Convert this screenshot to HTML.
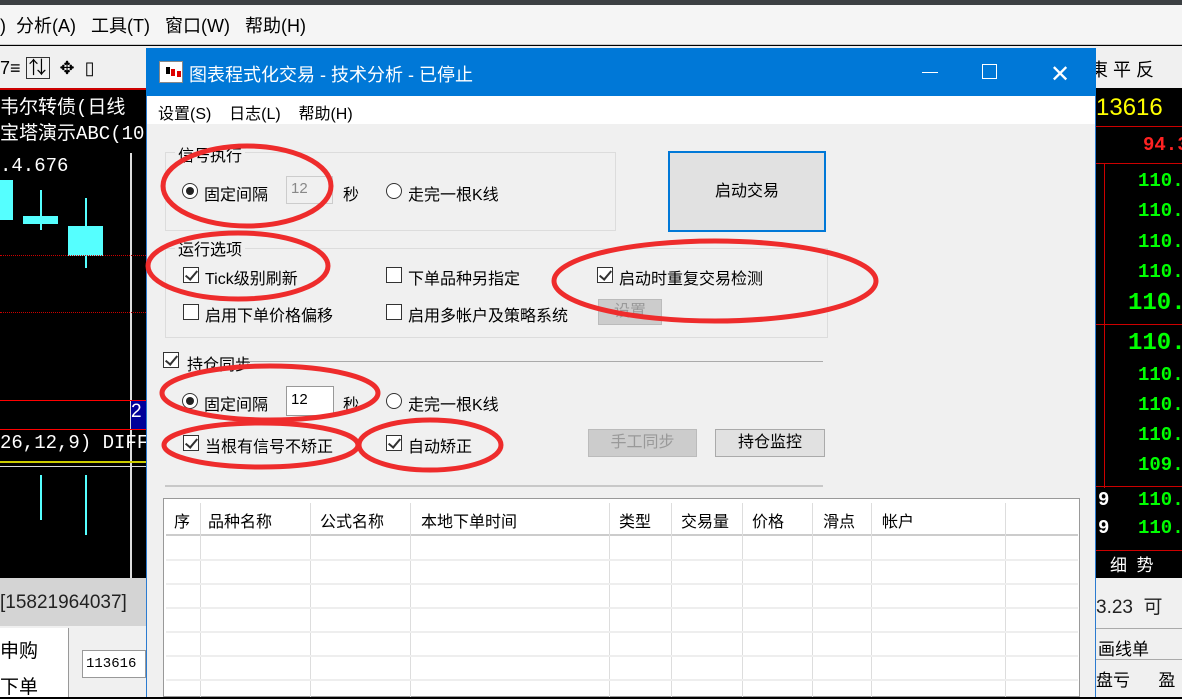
<!DOCTYPE html><html><head><meta charset="utf-8"><style>
*{margin:0;padding:0;box-sizing:border-box}
body{width:1182px;height:697px;overflow:hidden;position:relative;background:#000;font-family:"Liberation Sans","Noto Sans CJK SC",sans-serif;font-size:16px;color:#000}
.a{position:absolute;white-space:nowrap}
.cb{position:absolute;width:16px;height:16px;border:1px solid #333;background:#fff}
.cb.k::after{content:"";position:absolute;left:4px;top:0px;width:5px;height:10px;border:solid #333;border-width:0 2px 2px 0;transform:rotate(40deg)}
.rb{position:absolute;width:16px;height:16px;border:1px solid #333;border-radius:50%;background:#fff}
.rb.k::after{content:"";position:absolute;left:3px;top:3px;width:8px;height:8px;border-radius:50%;background:#222}
.g{color:#0f0;font-family:"Liberation Mono",monospace;font-weight:bold;font-size:19px}
</style></head><body>
<!-- main app background -->
<div class="a" style="left:0;top:0;width:1182px;height:5px;background:#3c4043"></div>
<div class="a" style="left:0;top:5px;width:1182px;height:40px;background:#f5f5f5;border-bottom:1px solid #ccc"></div>
<div class="a" style="left:0;top:12px;font-size:18px">)&nbsp;&nbsp;分析(A)&nbsp;&nbsp;&nbsp;工具(T)&nbsp;&nbsp;&nbsp;窗口(W)&nbsp;&nbsp;&nbsp;帮助(H)</div>
<div class="a" style="left:0;top:46px;width:1182px;height:42px;background:#f0f0f0"></div>
<div class="a" style="left:0;top:54px;font-size:18px">7≡ <span style="border:1px solid #333;padding:0 2px">⇅</span>&nbsp; ✥ &nbsp;▯</div>
<div class="a" style="left:1090px;top:56px;font-size:18px">東 平 反</div>
<div class="a" style="left:0;top:88px;width:146px;height:490px;background:#000;border-top:2px solid #c00"></div>
<div class="a" style="left:0;top:92px;color:#fff;font-size:19px;font-family:'Liberation Mono','Noto Sans CJK SC',monospace">韦尔转债(日线</div>
<div class="a" style="left:0;top:118px;color:#fff;font-size:19px;font-family:'Liberation Mono','Noto Sans CJK SC',monospace">宝塔演示ABC(10)</div>
<div class="a" style="left:0;top:155px;color:#fff;font-size:19px;font-family:'Liberation Mono',monospace">.4.676</div>
<div class="a" style="left:0;top:180px;width:13px;height:40px;background:#5ff"></div>
<div class="a" style="left:23px;top:216px;width:35px;height:8px;background:#5ff"></div>
<div class="a" style="left:40px;top:190px;width:2px;height:40px;background:#5ff"></div>
<div class="a" style="left:68px;top:226px;width:35px;height:30px;background:#5ff"></div>
<div class="a" style="left:85px;top:198px;width:2px;height:70px;background:#5ff"></div>
<div class="a" style="left:130px;top:153px;width:2px;height:430px;background:#ddd"></div>
<div class="a" style="left:0;top:255px;width:146px;border-top:1px dotted #c00"></div>
<div class="a" style="left:0;top:312px;width:146px;border-top:1px dotted #c00"></div>
<div class="a" style="left:0;top:400px;width:146px;height:30px;border-top:1px solid #f00;border-bottom:1px solid #f00"></div>
<div class="a" style="left:131px;top:401px;width:15px;height:28px;background:#009;color:#fff;font-size:19px">2</div>
<div class="a" style="left:0;top:432px;color:#fff;font-size:19px;font-family:'Liberation Mono',monospace">26,12,9) DIFF</div>
<div class="a" style="left:0;top:461px;width:146px;border-top:2px solid #cc0"></div>
<div class="a" style="left:0;top:466px;width:146px;border-top:1px solid #ddd"></div>
<div class="a" style="left:40px;top:475px;width:2px;height:45px;background:#5ff"></div>
<div class="a" style="left:85px;top:475px;width:2px;height:60px;background:#5ff"></div>
<div class="a" style="left:0;top:578px;width:146px;height:48px;background:#d4d4d4"></div>
<div class="a" style="left:0;top:592px;font-size:19px;color:#222">[15821964037]</div>
<div class="a" style="left:0;top:626px;width:146px;height:71px;background:#f0f0f0"></div>
<div class="a" style="left:0;top:628px;width:69px;height:69px;background:#fff;border-right:1px solid #999"></div>
<div class="a" style="left:0;top:636px;font-size:19px">申购</div>
<div class="a" style="left:0;top:672px;font-size:19px">下单</div>
<div class="a" style="left:82px;top:650px;width:64px;height:28px;background:#fff;border:1px solid #999;font-family:'Liberation Mono',monospace;font-size:14px;padding:5px 3px">113616</div>
<!-- right panel -->
<div class="a" style="left:1096px;top:88px;width:86px;height:490px;background:#000"></div>
<div class="a" style="left:1096px;top:94px;color:#ff0;font-size:24px;font-family:'Liberation Sans',sans-serif">13616 </div>
<div class="a" style="left:1096px;top:126px;width:86px;border-top:1px solid #c00"></div>
<div class="a" style="left:1143px;top:134px;color:#f22;font-weight:bold;font-size:19px;font-family:'Liberation Mono',monospace">94.3</div>
<div class="a" style="left:1096px;top:163px;width:86px;border-top:1px solid #c00"></div>
<div class="a" style="left:1104px;top:163px;height:325px;border-left:1px solid #c00"></div>
<div class="a g" style="left:1138px;top:170px">110.1</div>
<div class="a g" style="left:1138px;top:200px">110.1</div>
<div class="a g" style="left:1138px;top:231px">110.1</div>
<div class="a g" style="left:1138px;top:261px">110.1</div>
<div class="a g" style="left:1128px;top:290px;font-size:24px">110.1</div>
<div class="a" style="left:1096px;top:324px;width:86px;border-top:1px solid #c00"></div>
<div class="a g" style="left:1128px;top:330px;font-size:24px">110.1</div>
<div class="a g" style="left:1138px;top:364px">110.0</div>
<div class="a g" style="left:1138px;top:394px">110.0</div>
<div class="a g" style="left:1138px;top:424px">110.0</div>
<div class="a g" style="left:1138px;top:454px">109.9</div>
<div class="a" style="left:1096px;top:486px;width:86px;border-top:1px solid #c00"></div>
<div class="a g" style="left:1098px;top:489px;color:#fff">9</div><div class="a g" style="left:1138px;top:489px">110.1</div>
<div class="a g" style="left:1098px;top:517px;color:#fff">9</div><div class="a g" style="left:1138px;top:517px">110.1</div>
<div class="a" style="left:1096px;top:550px;width:86px;height:28px;border-top:1px solid #c00;color:#fff;font-size:17px;padding-left:14px">细 &nbsp;势</div>
<div class="a" style="left:1096px;top:578px;width:86px;height:119px;background:#f0f0f0"></div>
<div class="a" style="left:1096px;top:592px;font-size:19px;color:#222">3.23 &nbsp;可</div>
<div class="a" style="left:1096px;top:628px;width:86px;height:32px;border-top:1px solid #aaa;border-bottom:1px solid #aaa;font-size:17px;padding:6px 2px">画线单</div>
<div class="a" style="left:1096px;top:666px;font-size:17px">盘亏 &nbsp;&nbsp;&nbsp;&nbsp;&nbsp;盈</div>
<!-- dialog -->
<div class="a" style="left:146px;top:48px;width:950px;height:649px;background:#f0f0f0;border-left:1px solid #2b7bd0;border-right:1px solid #2b7bd0"></div>
<div class="a" style="left:146px;top:48px;width:950px;height:48px;background:#0078d7"></div>
<div class="a" style="left:159px;top:61px;width:24px;height:22px;background:#fff;border:1px solid #888"><div style="position:absolute;left:6px;top:5px;width:4px;height:7px;background:#000"></div><div style="position:absolute;left:11px;top:7px;width:4px;height:7px;background:#d00"></div><div style="position:absolute;left:17px;top:9px;width:4px;height:6px;background:#d00"></div></div>
<div class="a" style="left:189px;top:61px;color:#fff;font-size:18px">图表程式化交易 - 技术分析 - 已停止</div>
<div class="a" style="left:922px;top:72px;width:16px;border-top:1px solid #fff"></div>
<div class="a" style="left:982px;top:64px;width:15px;height:15px;border:1px solid #fff"></div>
<div class="a" style="left:1050px;top:60px;color:#fff;font-size:24px;font-weight:100">✕</div>
<div class="a" style="left:147px;top:96px;width:948px;height:28px;background:#fff"></div>
<div class="a" style="left:158px;top:100px">设置(S)&nbsp;&nbsp;&nbsp;&nbsp;日志(L)&nbsp;&nbsp;&nbsp;&nbsp;帮助(H)</div>
<!-- group 1 -->
<div class="a" style="left:165px;top:152px;width:451px;height:79px;border:1px solid #dcdcdc"></div>
<div class="a" style="left:175px;top:142px;background:#f0f0f0;padding:0 3px">信号执行</div>
<div class="rb k" style="left:182px;top:183px"></div><div class="a" style="left:204px;top:181px">固定间隔</div>
<div class="a" style="left:286px;top:176px;width:47px;height:28px;border:1px solid #ccc;background:#f0f0f0;color:#888;padding:3px 4px;font-size:15px">12</div>
<div class="a" style="left:343px;top:181px">秒</div>
<div class="rb" style="left:386px;top:183px"></div><div class="a" style="left:408px;top:181px">走完一根K线</div>
<div class="a" style="left:668px;top:151px;width:158px;height:81px;border:2px solid #0078d7;background:#e1e1e1;text-align:center;line-height:77px">启动交易</div>
<!-- group 2 -->
<div class="a" style="left:165px;top:248px;width:663px;height:90px;border:1px solid #dcdcdc"></div>
<div class="a" style="left:175px;top:236px;background:#f0f0f0;padding:0 3px">运行选项</div>
<div class="cb k" style="left:183px;top:267px"></div><div class="a" style="left:205px;top:265px">Tick级别刷新</div>
<div class="cb" style="left:386px;top:267px"></div><div class="a" style="left:408px;top:265px">下单品种另指定</div>
<div class="cb k" style="left:597px;top:267px"></div><div class="a" style="left:619px;top:265px">启动时重复交易检测</div>
<div class="cb" style="left:183px;top:304px"></div><div class="a" style="left:205px;top:302px">启用下单价格偏移</div>
<div class="cb" style="left:386px;top:304px"></div><div class="a" style="left:408px;top:302px;width:172px;overflow:hidden">启用多帐户及策略系统</div>
<div class="a" style="left:598px;top:299px;width:64px;height:26px;background:#ccc;border:1px solid #bbb;color:#999;text-align:center;line-height:24px">设置</div>
<!-- group 3 -->
<div class="cb k" style="left:163px;top:352px"></div><div class="a" style="left:187px;top:351px">持仓同步</div>
<div class="a" style="left:249px;top:361px;width:574px;border-top:1px solid #aaa"></div>
<div class="rb k" style="left:182px;top:393px"></div><div class="a" style="left:204px;top:391px">固定间隔</div>
<div class="a" style="left:286px;top:386px;width:48px;height:30px;border:1px solid #999;background:#fff;padding:4px 4px;font-size:15px">12</div>
<div class="a" style="left:343px;top:391px">秒</div>
<div class="rb" style="left:386px;top:393px"></div><div class="a" style="left:408px;top:391px">走完一根K线</div>
<div class="cb k" style="left:183px;top:435px"></div><div class="a" style="left:205px;top:433px">当根有信号不矫正</div>
<div class="cb k" style="left:386px;top:435px"></div><div class="a" style="left:408px;top:433px">自动矫正</div>
<div class="a" style="left:588px;top:429px;width:109px;height:28px;background:#ccc;border:1px solid #bbb;color:#999;text-align:center;line-height:26px">手工同步</div>
<div class="a" style="left:715px;top:429px;width:110px;height:28px;background:#e1e1e1;border:1px solid #aaa;text-align:center;line-height:26px">持仓监控</div>
<div class="a" style="left:165px;top:485px;width:658px;border-top:2px solid #c8c8c8"></div>
<!-- table -->
<div class="a" style="left:163px;top:498px;width:917px;height:199px;background:#fff;border:1px solid #999"></div>
<div class="a" style="left:166px;top:503px;width:912px;height:33px;border-bottom:2px solid #ccc"></div>
<div class="a" style="left:174px;top:508px">序</div><div class="a" style="left:208px;top:508px">品种名称</div><div class="a" style="left:320px;top:508px">公式名称</div><div class="a" style="left:421px;top:508px">本地下单时间</div><div class="a" style="left:619px;top:508px">类型</div><div class="a" style="left:681px;top:508px">交易量</div><div class="a" style="left:752px;top:508px">价格</div><div class="a" style="left:823px;top:508px">滑点</div><div class="a" style="left:882px;top:508px">帐户</div>
<svg class="a" style="left:0;top:0" width="1182" height="697">
<g stroke="#ddd" stroke-width="1">
<line x1="200.5" y1="503" x2="200.5" y2="697"/><line x1="310.5" y1="503" x2="310.5" y2="697"/><line x1="410.5" y1="503" x2="410.5" y2="697"/><line x1="609.5" y1="503" x2="609.5" y2="697"/><line x1="671.5" y1="503" x2="671.5" y2="697"/><line x1="742.5" y1="503" x2="742.5" y2="697"/><line x1="812.5" y1="503" x2="812.5" y2="697"/><line x1="871.5" y1="503" x2="871.5" y2="697"/><line x1="1005.5" y1="503" x2="1005.5" y2="697"/>
</g>
<g stroke="#eee" stroke-width="2"><line x1="166" y1="560" x2="1078" y2="560"/><line x1="166" y1="584" x2="1078" y2="584"/><line x1="166" y1="608" x2="1078" y2="608"/><line x1="166" y1="632" x2="1078" y2="632"/><line x1="166" y1="656" x2="1078" y2="656"/><line x1="166" y1="680" x2="1078" y2="680"/></g>
<g fill="none" stroke="#ee2c2c" stroke-width="5">
<ellipse cx="247" cy="186" rx="84" ry="40"/>
<ellipse cx="238" cy="266" rx="90" ry="33"/>
<ellipse cx="715" cy="281" rx="161" ry="40"/>
<ellipse cx="270" cy="393" rx="108" ry="27"/>
<ellipse cx="261" cy="445" rx="97" ry="22"/>
<ellipse cx="430" cy="445" rx="71" ry="25"/>
</g></svg>
</body></html>
